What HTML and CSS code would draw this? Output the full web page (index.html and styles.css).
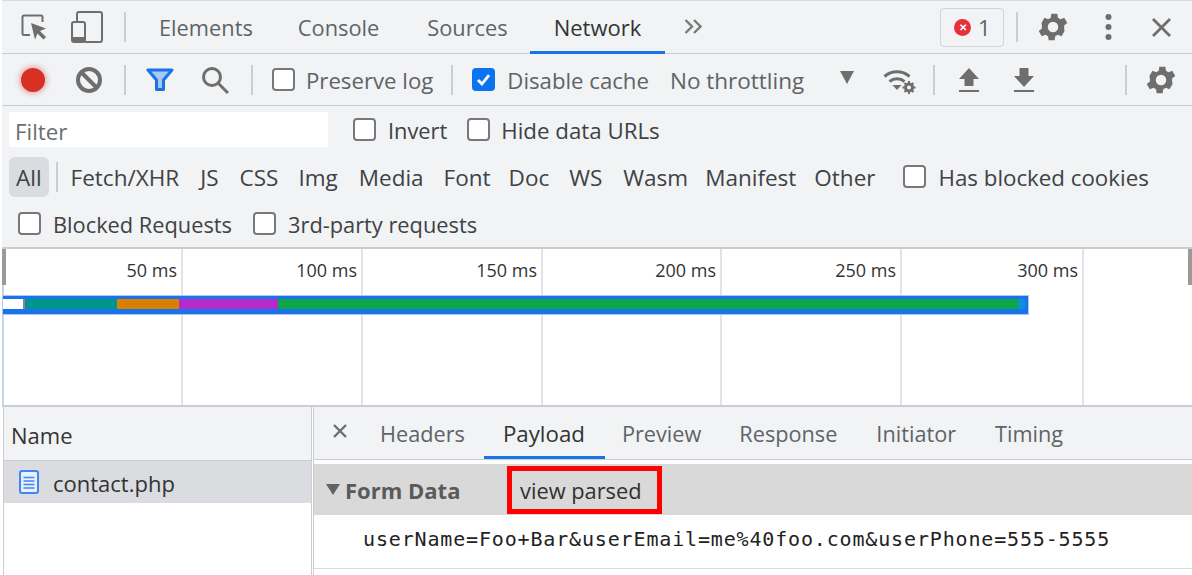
FILE: index.html
```html
<!DOCTYPE html>
<html lang="en">
<head>
<meta charset="utf-8">
<title>DevTools Network</title>
<link rel="stylesheet" href="styles.css">
</head>
<body>
<div class="app">
  <div class="bar tabs-bar">
    <svg class="ic ic-inspect" viewBox="0 0 28 30"><path d="M9 23H3a1.500 1.500 0 0 1-1.500-1.500V5A1.500 1.500 0 0 1 3 3.500h17A1.500 1.500 0 0 1 21.500 5v5" fill="none" stroke="#6e6e6e" stroke-width="2"/><path d="M10 11l15 5.500-6 2.500 6 6-2.500 2.500-6-6-2.500 6z" fill="#6e6e6e"/></svg>
    <svg class="ic ic-device" viewBox="0 0 32 32"><path d="M6 10V3A2 2 0 0 1 8 1h21a2 2 0 0 1 2 2v26a2 2 0 0 1-2 2H14" fill="none" stroke="#6e6e6e" stroke-width="2"/><rect x="1" y="11" width="13" height="20" rx="2" fill="none" stroke="#6e6e6e" stroke-width="2"/><rect x="1" y="26" width="13" height="5" fill="#6e6e6e"/></svg>
    <span class="sep sep-a"></span>
    <span class="tab tab-elements">Elements</span>
    <span class="tab tab-console">Console</span>
    <span class="tab tab-sources">Sources</span>
    <span class="tab tab-network active">Network</span>
    <svg class="ic more" viewBox="0 0 18 15"><path d="M1.500 1l6.500 6.500-6.500 6.500M10 1l6.500 6.500L10 14" fill="none" stroke="#7a7a7a" stroke-width="2.400"/></svg>
    <span class="spring"></span>
    <span class="err"><span class="err-dot">✕</span>1</span>
    <span class="sep sep-b"></span>
    <svg class="ic gear gear-top" viewBox="0 0 24 24"><path d="M19.400 13a7.500 7.500 0 0 0 0-2l2.100-1.600-2-3.500-2.500 1a7.500 7.500 0 0 0-1.700-1l-.4-2.700h-4l-.4 2.700a7.500 7.500 0 0 0-1.700 1l-2.500-1-2 3.500L4.600 11a7.500 7.500 0 0 0 0 2l-2.100 1.600 2 3.500 2.500-1a7.500 7.500 0 0 0 1.700 1l.4 2.700h4l.4-2.700a7.500 7.500 0 0 0 1.700-1l2.500 1 2-3.500zM12 15.500a3.500 3.500 0 1 1 0-7 3.500 3.500 0 0 1 0 7z" fill="#6e6e6e"/></svg>
    <svg class="ic dots" viewBox="0 0 7 28"><circle cx="3.500" cy="4" r="3" fill="#6e6e6e"/><circle cx="3.500" cy="14" r="3" fill="#6e6e6e"/><circle cx="3.500" cy="24" r="3" fill="#6e6e6e"/></svg>
    <svg class="ic close" viewBox="0 0 21 21"><path d="M2 2l17 17M19 2L2 19" stroke="#6e6e6e" stroke-width="2.800" fill="none"/></svg>
  </div>
  <div class="bar tools-bar">
    <span class="rec"></span>
    <svg class="ic clear" viewBox="0 0 26 26"><circle cx="13" cy="13" r="11" fill="none" stroke="#6e6e6e" stroke-width="4"/><path d="M6 6l14 14" stroke="#6e6e6e" stroke-width="4"/></svg>
    <span class="sep sep-c"></span>
    <svg class="ic funnel" viewBox="0 0 28 24"><path d="M2 2h24l-8.500 10v9.500h-7V12z" fill="#a5c8f5" stroke="#1a73e8" stroke-width="3" stroke-linejoin="round"/></svg>
    <svg class="ic search" viewBox="0 0 28 28"><circle cx="11" cy="11" r="8.500" fill="none" stroke="#6e6e6e" stroke-width="3"/><path d="M17 17l10 10" stroke="#6e6e6e" stroke-width="3"/></svg>
    <span class="sep sep-d"></span>
    <span class="check check-preserve"></span>
    <span class="label label-preserve">Preserve log</span>
    <span class="sep sep-e"></span>
    <span class="check checked"><svg viewBox="0 0 24 24"><path d="M5 12.500l5 5L19 6.500" fill="none" stroke="#fff" stroke-width="3.500"/></svg></span>
    <span class="label label-disable">Disable cache</span>
    <span class="label label-throttle">No throttling</span>
    <span class="tri"></span>
    <svg class="ic wifi" viewBox="0 0 33 28"><path d="M1.500 10.500a19 19 0 0 1 25 0M6.500 15.500a12 12 0 0 1 15 0" fill="none" stroke="#6e6e6e" stroke-width="3"/><path d="M9.500 19h9L14 24z" fill="#6e6e6e"/><circle cx="26" cy="21.500" r="3.500" fill="none" stroke="#6e6e6e" stroke-width="3"/><path d="M26 15v2.500M26 25.500V28M19.500 21.500H22M30 21.500h2.500M21.500 17l1.800 1.800M28.700 24.200l1.800 1.800M21.500 26l1.800-1.800M28.700 18.800l1.800-1.800" stroke="#6e6e6e" stroke-width="2"/></svg>
    <span class="sep sep-f"></span>
    <svg class="ic updown up" viewBox="0 0 22 26"><path d="M11 1l10 11h-5.500v7h-9v-7H1z" fill="#6e6e6e"/><path d="M1 24h20" stroke="#6e6e6e" stroke-width="2"/></svg>
    <svg class="ic updown down" viewBox="0 0 22 26"><path d="M6.500 1h9v8H21L11 20 1 9h5.500z" fill="#6e6e6e"/><path d="M1 24h20" stroke="#6e6e6e" stroke-width="2"/></svg>
    <span class="spring"></span>
    <span class="sep sep-g"></span>
    <svg class="ic gear gear-tools" viewBox="0 0 24 24"><path d="M19.400 13a7.500 7.500 0 0 0 0-2l2.100-1.600-2-3.500-2.500 1a7.500 7.500 0 0 0-1.700-1l-.4-2.700h-4l-.4 2.700a7.500 7.500 0 0 0-1.700 1l-2.500-1-2 3.500L4.600 11a7.500 7.500 0 0 0 0 2l-2.100 1.600 2 3.500 2.500-1a7.500 7.500 0 0 0 1.700 1l.4 2.700h4l.4-2.700a7.500 7.500 0 0 0 1.700-1l2.500 1 2-3.500zM12 15.500a3.500 3.500 0 1 1 0-7 3.500 3.500 0 0 1 0 7z" fill="#6e6e6e"/></svg>
  </div>
  <div class="filters">
    <div class="frow frow-1">
      <span class="filter-input">Filter</span>
      <span class="check check-invert"></span><span class="flabel flabel-invert">Invert</span>
      <span class="check check-hide"></span><span class="flabel flabel-hide">Hide data URLs</span>
    </div>
    <div class="frow frow-2">
      <span class="chip chip-all">All</span>
      <span class="sep sep-h"></span>
      <span class="chip">Fetch/XHR</span><span class="chip chip-js">JS</span><span class="chip chip-css">CSS</span><span class="chip">Img</span><span class="chip chip-media">Media</span><span class="chip">Font</span><span class="chip chip-doc">Doc</span><span class="chip">WS</span><span class="chip chip-wasm">Wasm</span><span class="chip chip-manifest">Manifest</span><span class="chip chip-other">Other</span>
      <span class="check check-cookies"></span><span class="flabel flabel-cookies">Has blocked cookies</span>
    </div>
    <div class="frow frow-3">
      <span class="check check-blocked"></span><span class="flabel">Blocked Requests</span>
      <span class="check check-third"></span><span class="flabel">3rd-party requests</span>
    </div>
  </div>
  <div class="overview">
    <div class="ticks">
      <div class="tick">50 ms</div><div class="tick">100 ms</div><div class="tick">150 ms</div><div class="tick">200 ms</div><div class="tick">250 ms</div><div class="tick">300 ms</div>
    </div>
    <span class="range-l"></span>
    <span class="handle handle-l"></span>
    <span class="handle handle-r"></span>
    <div class="wf">
      <span class="seg seg-white"></span><span class="seg seg-teal"></span><span class="seg seg-orange"></span><span class="seg seg-purple"></span><span class="seg seg-green"></span><span class="seg seg-blue"></span>
    </div>
  </div>
  <div class="lower">
    <div class="names">
      <div class="names-head">Name</div>
      <div class="names-row">
        <svg class="doc" viewBox="0 0 20 24"><rect x="1" y="1" width="18" height="22" rx="2" fill="#e8f0fe" stroke="#4285f4" stroke-width="2"/><path d="M4.500 7.500h11M4.500 11h11M4.500 14.500h11M4.500 18h11" stroke="#4285f4" stroke-width="1.500"/></svg>
        <span class="file-name">contact.php</span>
      </div>
    </div>
    <div class="detail">
      <div class="detail-tabs">
        <svg class="dclose" viewBox="0 0 14 14"><path d="M1 1l12 12M13 1L1 13" stroke="#6e6e6e" stroke-width="2.400" fill="none"/></svg>
        <span class="dtab">Headers</span><span class="dtab active">Payload</span><span class="dtab dtab-preview">Preview</span><span class="dtab">Response</span><span class="dtab dtab-initiator">Initiator</span><span class="dtab dtab-timing">Timing</span>
      </div>
      <div class="section-head">
        <span class="sec-tri"></span>
        <span class="sec-title">Form Data</span>
        <span class="parsed">view parsed</span>
      </div>
      <div class="payload">userName=Foo+Bar&amp;userEmail=me%40foo.com&amp;userPhone=555-5555</div>
    </div>
  </div>
</div>
</body>
</html>
```
FILE: styles.css
```css
* { box-sizing: border-box; }
html, body { margin: 0; padding: 0; }
body { width: 1192px; height: 575px; overflow: hidden; background: #fff; font-family: "Open Sans", "Noto Sans", sans-serif; font-size: 22px; color: #5f6368; }
.app { width: 1190px; height: 575px; margin-left: 2px; display: flex; flex-direction: column; overflow: hidden; }
.bar { display: flex; align-items: center; background: #f1f3f4; flex: none; border-bottom: 1px solid #cbcdd1; }
.tabs-bar { height: 54px; padding-left: 19px; border-top: 1px solid #d9dbde; }
.tools-bar { height: 52px; padding-left: 16px; }
.ic { display: block; flex: none; }
.spring { flex: 1; }
.sep { display: block; flex: none; width: 2px; height: 30px; background: #cbcdd1; }
.ic-inspect { width: 28px; height: 30px; }
.ic-device { width: 32px; height: 32px; margin-left: 22px; }
.sep-a { margin-left: 21px; }
.tab { font-size: 21.800px; line-height: 54px; height: 53px; padding: 0 23px; white-space: nowrap; }
.tab-elements { margin-left: 10px; }
.tab-console { margin-left: -1px; }
.tab-sources { margin-left: 2px; }
.tab-network { font-size: 22px; line-height: 52px; margin-left: -1px; padding: 0 24px; }
.tab.active { color: #333; border-bottom: 3px solid #1a73e8; }
.more { width: 18px; height: 15px; margin-left: 19px; margin-top: -1px; }
.err { display: flex; align-items: center; width: 64px; height: 39px; border: 1px solid #d0d2d6; border-radius: 4px; padding-left: 13px; font-size: 22px; }
.err-dot { width: 17px; height: 17px; border-radius: 50%; background: #e8303a; color: #fff; font-size: 10px; font-weight: 700; line-height: 17px; text-align: center; margin-right: 7px; }
.sep-b { margin-left: 12px; }
.gear { width: 36px; height: 36px; }
.gear-top { margin-left: 17px; }
.dots { width: 7px; height: 28px; margin-left: 34px; }
.close { width: 21px; height: 21px; margin-left: 39px; margin-right: 20px; }
.rec { width: 24px; height: 24px; border-radius: 50%; background: #d93025; box-shadow: 0 0 5px 2px rgba(217,48,37,.35); margin-left: 3px; flex: none; }
.clear { width: 26px; height: 26px; margin-left: 31px; }
.sep-c { margin-left: 22px; }
.funnel { width: 28px; height: 24px; margin-left: 20px; }
.search { width: 28px; height: 28px; margin-left: 27px; }
.sep-d { margin-left: 22px; }
.check { display: block; flex: none; width: 23px; height: 23px; border: 2px solid #76787c; border-radius: 4px; background: #fff; }
.check-preserve { margin-left: 19px; }
.label { font-size: 22.200px; white-space: nowrap; margin-top: 2px; }
.label-preserve { margin-left: 11px; }
.sep-e { margin-left: 18px; }
.check.checked { margin-left: 19px; background: #0a74f0; border-color: #0a74f0; }
.check.checked svg { display: block; width: 19px; height: 19px; }
.label-disable { margin-left: 12px; }
.label-throttle { margin-left: 21px; font-size: 22.500px; }
.tri { flex: none; width: 0; height: 0; border-left: 7px solid transparent; border-right: 7px solid transparent; border-top: 13px solid #6e6e6e; margin-left: 36px; margin-top: -4px; }
.wifi { width: 33px; height: 28px; margin-left: 29px; }
.sep-f { margin-left: 17px; }
.updown { width: 22px; height: 26px; }
.up { margin-left: 23px; }
.down { margin-left: 33px; }
.sep-g { margin-right: 16px; }
.gear-tools { margin-right: 13px; }
.filters { background: #f1f3f4; height: 143px; flex: none; border-bottom: 2px solid #cbcdd1; padding-left: 7px; }
.frow { display: flex; align-items: center; white-space: nowrap; color: #333; font-size: 22.300px; }
.frow-1 { height: 47px; }
.frow-2 { height: 47px; }
.frow-3 { height: 47px; padding-left: 9px; font-size: 21.800px; }
.filter-input { display: block; width: 319px; height: 35px; background: #fff; padding-left: 6px; line-height: 39px; color: #6a6d72; flex: none; }
.check-invert { margin-left: 25px; }
.flabel { margin-left: 12px; margin-top: 2px; color: #404245; }
.frow-3 .flabel { margin-top: 1px; }
.flabel-invert { margin-top: 1px; margin-right: 20px; font-size: 21.800px; }
.flabel-hide { margin-left: 11px; }
.flabel-cookies { margin-left: 13px; }
.chip { padding: 0 10px; line-height: 41px; height: 40px; border-radius: 6px; color: #404245; font-size: 22.500px; }
.chip-all { background: #dadce0; padding: 0 7px; margin-right: 7px; }
.chip-js, .chip-css, .chip-media { margin-left: 1px; }
.chip-doc { margin-left: -2px; }
.chip-wasm { margin-left: 1px; }
.chip-manifest { margin-left: -3px; }
.chip-other { margin-left: -2px; }
.sep-h { height: 30px; margin-right: 3px; }
.check-cookies { margin-left: 17px; }
.check-third { margin-left: 21px; }
.overview { position: relative; height: 158px; flex: none; background: #fff; }
.ticks { display: flex; height: 158px; padding-left: 1px; border-bottom: 2px solid #cbcdd1; }
.tick { width: 180px; flex: none; text-align: right; padding: 8px 4px 0 0; font-size: 18px; line-height: 27px; color: #333; border-right: 2px solid #e1e3e6; white-space: nowrap; }
.tick:nth-child(4) { width: 179px; }
.tick:nth-child(6) { width: 182px; }
.range-l { position: absolute; left: 0; top: 36px; width: 2px; height: 120px; background: #c5d3ee; }
.handle { position: absolute; top: 0; width: 4px; height: 36px; background: #9a9a9a; }
.handle-l { left: 0; }
.handle-r { right: 0; }
.wf { position: absolute; left: 0; top: 46px; width: 1027px; height: 20px; display: flex; align-items: stretch; background: #1a73e8; border: 1px solid #a9c8f5; padding: 3px 3px 5px 0; }
.seg { display: block; height: 100%; }
.seg-white { width: 22px; background: #fff; border-right: 2px solid #888; }
.seg-teal { width: 91px; background: #00958a; margin-left: 1px; }
.seg-orange { width: 62px; background: #d98000; }
.seg-purple { width: 99px; background: #b52bc9; }
.seg-green { width: 740px; background: #0aa648; }
.seg-blue { width: 7px; background: #0d90d8; }
.lower { display: flex; flex: 1; min-height: 0; }
.names { width: 309px; margin-left: 1px; margin-right: 1px; flex: none; border-left: 1px solid #cbcdd1; border-right: 1px solid #cbcdd1; }
.names-head { height: 54px; line-height: 56px; background: #f1f3f4; padding-left: 7px; border-bottom: 1px solid #cbcdd1; color: #333; font-size: 22px; }
.names-row { height: 42px; display: flex; align-items: center; background: #dadce0; padding-left: 15px; color: #333; font-size: 22px; }
.file-name { margin-top: 2px; }
.doc { width: 20px; height: 24px; margin-right: 14px; flex: none; }
.detail { flex: 1; min-width: 0; border-left: 1px solid #cbcdd1; }
.detail-tabs { height: 53px; display: flex; align-items: center; background: #f1f3f4; border-bottom: 1px solid #cbcdd1; padding-left: 19px; }
.dclose { width: 14px; height: 14px; margin-right: 14px; margin-top: -5px; flex: none; }
.dtab { font-size: 21.700px; padding: 0 19px; height: 52px; line-height: 54px; white-space: nowrap; }
.dtab.active { font-size: 22.300px; padding-right: 20px; color: #333; border-bottom: 3px solid #1a73e8; }
.dtab-preview { margin-left: -2px; }
.dtab-initiator { margin-left: 1px; }
.dtab-timing { margin-left: 1px; }
.section-head { display: flex; align-items: center; height: 51px; margin-top: 4px; background: #d9d9d9; padding-left: 12px; }
.sec-tri { width: 0; height: 0; border-left: 7px solid transparent; border-right: 7px solid transparent; border-top: 11px solid #5f6368; flex: none; }
.sec-title { font-weight: 700; font-size: 22px; line-height: 32px; padding-top: 1px; color: #5a5a5a; margin-left: 5px; width: 162px; white-space: nowrap; }
.parsed { display: block; height: 48px; line-height: 40px; border: 5px solid #f00; padding: 0 15px 0 8px; color: #303030; font-size: 21.800px; white-space: nowrap; }
.payload { height: 54px; line-height: 48px; padding-left: 49px; font-family: "DejaVu Sans Mono", monospace; font-size: 20px; letter-spacing: 0.840px; color: #222; border-bottom: 1px solid #d9dbde; white-space: nowrap; }
```
